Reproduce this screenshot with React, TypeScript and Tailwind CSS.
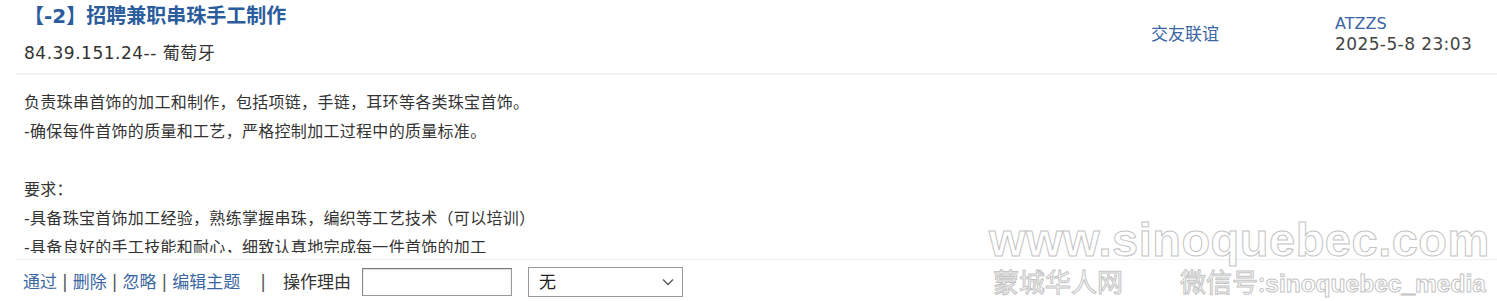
import React from "react";

const F = "font-['DejaVu_Sans','Noto_Sans_CJK_SC',sans-serif]";

export default function App() {
  return (
    <div className={`relative w-[1497px] h-[301px] overflow-hidden bg-white text-[#333] ${F}`}>
      {/* header */}
      <div className="flex h-[73px]">
        <div className="flex-1 pl-6">
          <div className="pt-[3px] text-[20px] leading-[26px] font-bold text-[#2b5c9c]">【-2】招聘兼职串珠手工制作</div>
          <div className="mt-[13px] text-[17px] leading-[22px] tracking-[0.5px] text-[#333]">84.39.151.24-- 葡萄牙</div>
        </div>
        <div className="w-[184px] pt-[23px] text-[17px] leading-[22px] text-[#3a66a3]">交友联谊</div>
        <div className="w-[162px] pt-[14px] leading-[20px]">
          <div className="text-[16px] text-[#3a66a3]">ATZZS</div>
          <div className="text-[17px] tracking-[0.4px] text-[#444]">2025-5-8 23:03</div>
        </div>
      </div>
      <div className="ml-4 h-[2px] bg-[#f2f2f2]" />
      {/* body */}
      <div className="h-[178px] overflow-hidden pl-6 pt-[13px] text-[16px] leading-[29px] tracking-[0.3px] text-[#333]">
        <div>负责珠串首饰的加工和制作，包括项链，手链，耳环等各类珠宝首饰。</div>
        <div>-确保每件首饰的质量和工艺，严格控制加工过程中的质量标准。</div>
        <div>&nbsp;</div>
        <div>要求：</div>
        <div>-具备珠宝首饰加工经验，熟练掌握串珠，编织等工艺技术（可以培训）</div>
        <div>-具备良好的手工技能和耐心，细致认真地完成每一件首饰的加工</div>
        <div>-有良好的团队合作精神</div>
      </div>
      <div className="ml-4 mt-[6px] h-px bg-[#f0f0f0]" />
      {/* actions */}
      <div className="flex items-center whitespace-nowrap pl-[23px] pt-[7px] text-[17px] leading-[22px]">
        <span className="text-[#3a66a3]">通过</span>
        <span className="mx-[5px] text-[#555]">|</span>
        <span className="text-[#3a66a3]">删除</span>
        <span className="mx-[5px] text-[#555]">|</span>
        <span className="text-[#3a66a3]">忽略</span>
        <span className="mx-[5px] text-[#555]">|</span>
        <span className="text-[#3a66a3]">编辑主题</span>
        <span className="ml-[20px] mr-[17px] text-[#555]">|</span>
        <span className="text-[#333]">操作理由</span>
        <div className="ml-[11px] h-[28px] w-[150px] border border-[#999] border-t-[#777] border-l-[#888] shadow-[inset_0_1px_2px_rgba(0,0,0,0.15)] bg-white" />
        <div className="ml-[16px] flex h-[30px] w-[155px] items-center justify-between border border-[#999] bg-white pl-[10px] pr-[8px]">
          <span className="text-[17px] text-[#222]">无</span>
          <svg width="12" height="8" viewBox="0 0 12 8" fill="none" stroke="#555" strokeWidth="1.3">
            <path d="M1 1.5 L6 6.5 L11 1.5" />
          </svg>
        </div>
      </div>
      {/* watermark */}
      <div className="pointer-events-none absolute left-[989px] top-[214px] whitespace-nowrap font-['Liberation_Sans',sans-serif] font-bold text-white/80 [-webkit-text-stroke:1px_#c4c4c4]">
        <div className="text-[47px] leading-[52px] tracking-[0.5px]">www.sinoquebec.com</div>
        <div className="flex items-baseline leading-[30px]">
          <span className="ml-[4px] text-[26px] font-['Noto_Sans_CJK_SC',sans-serif] font-normal">蒙城华人网</span>
          <span className="ml-[57px] text-[26px] font-['Noto_Sans_CJK_SC',sans-serif] font-normal">微信号:</span>
          <span className="text-[24.5px]">sinoquebec_media</span>
        </div>
      </div>
    </div>
  );
}
